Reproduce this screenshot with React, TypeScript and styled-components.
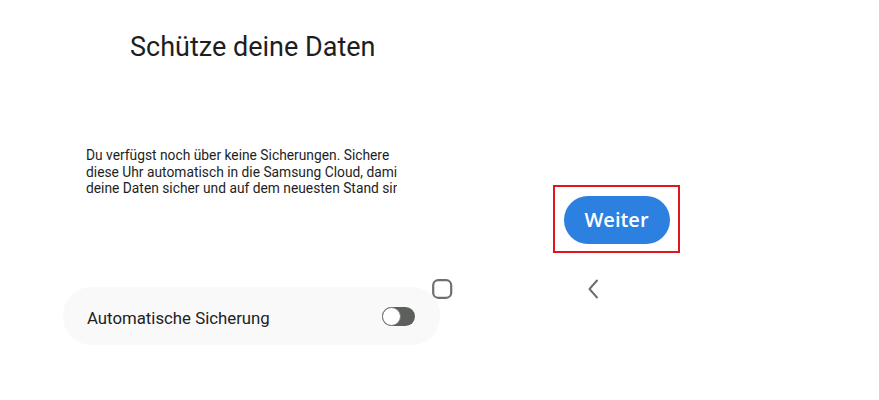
import React from "react";
import styled, { createGlobalStyle } from "styled-components";

const Global = createGlobalStyle`
  html, body { margin: 0; padding: 0; background: #ffffff; }
  body { font-family: Roboto, "Noto Sans", sans-serif; color: #1b1b1b; }
  #root { width: 879px; height: 400px; overflow: hidden; position: relative; }
`;

const Page = styled.div`
  display: grid;
  grid-template-columns: 440px 1fr;
  width: 879px;
  height: 400px;
`;

const LeftCol = styled.div`
  display: flex;
  flex-direction: column;
`;

const Title = styled.h1`
  margin: 30px 0 0 130px;
  font-size: 27px;
  font-weight: 400;
  line-height: 34px;
  color: #1e1e1e;
`;

const Body = styled.div`
  margin: 83px 0 0 86px;
  width: 311px;
  overflow: hidden;
  font-size: 13.8px;
  line-height: 16.5px;
  color: #1e1e1e;
`;

const Line = styled.div`
  white-space: nowrap;
`;

const Card = styled.div`
  margin: 90px 0 0 63px;
  width: 377px;
  height: 58px;
  border-radius: 28px;
  background: #f9f9f9;
  display: flex;
  align-items: center;
  justify-content: space-between;
  padding: 0 25px 0 24px;
  box-sizing: border-box;
`;

const CardLabel = styled.span`
  font-size: 16.8px;
  color: #222;
  margin-top: 4px;
`;

const Toggle = styled.div`
  width: 33px;
  height: 19px;
  border-radius: 10px;
  background: #5d5f5d;
  position: relative;
  margin-top: 2px;
`;

const Knob = styled.div`
  position: absolute;
  left: 0;
  top: 0;
  width: 17px;
  height: 17px;
  border-radius: 50%;
  background: #ffffff;
  border: 1px solid #7a7a7a;
`;

const RightCol = styled.div`
  display: flex;
  flex-direction: column;
  padding: 185px 0 0 113px;
`;

const Highlight = styled.div`
  width: 127px;
  height: 68px;
  box-sizing: border-box;
  border: 2px solid #e0161e;
  display: flex;
  align-items: center;
  justify-content: center;
`;

const Button = styled.button`
  width: 106px;
  height: 48px;
  border: none;
  border-radius: 24px;
  background: #2b80e0;
  color: #ffffff;
  font-family: "Open Sans", Roboto, sans-serif;
  font-size: 20px;
  font-weight: 600;
  padding: 0;
  margin-top: 1px;
`;

const NavBar = styled.div`
  position: absolute;
  top: 279px;
  left: 432px;
  display: flex;
  align-items: center;
  gap: 134px;
`;

export default function App() {
  return (
    <>
      <Global />
      <Page>
        <LeftCol>
          <Title>Schütze deine Daten</Title>
          <Body>
            <Line>Du verfügst noch über keine Sicherungen. Sichere</Line>
            <Line>diese Uhr automatisch in die Samsung Cloud, damit</Line>
            <Line>deine Daten sicher und auf dem neuesten Stand sind.</Line>
          </Body>
          <Card>
            <CardLabel>Automatische Sicherung</CardLabel>
            <Toggle>
              <Knob />
            </Toggle>
          </Card>
        </LeftCol>
        <RightCol>
          <Highlight>
            <Button>Weiter</Button>
          </Highlight>
        </RightCol>
      </Page>
      <NavBar>
        <svg width="21" height="20" viewBox="0 0 21 20">
          <rect x="1.2" y="1.2" width="18" height="17.6" rx="5" fill="none" stroke="#6f6f6f" strokeWidth="2.2" />
        </svg>
        <svg width="12" height="20" viewBox="0 0 12 20">
          <path d="M10 1.5 L2.5 10 L10 18.5" fill="none" stroke="#6f6f6f" strokeWidth="2" strokeLinecap="round" strokeLinejoin="round" />
        </svg>
      </NavBar>
    </>
  );
}
